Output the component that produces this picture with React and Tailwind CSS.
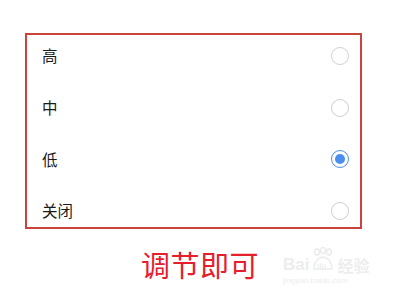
import React from 'react';

const options = [
  { label: '高', checked: false },
  { label: '中', checked: false },
  { label: '低', checked: true },
  { label: '关闭', checked: false },
];

function Radio({ checked }) {
  if (checked) {
    return (
      <div className="w-[18px] h-[18px] rounded-full border-[1.5px] border-[#4a90e6] flex items-center justify-center">
        <div className="w-[10px] h-[10px] rounded-full bg-[#4a8ef0]" />
      </div>
    );
  }
  return <div className="w-[18px] h-[18px] rounded-full border-[1.5px] border-[#cfcfcf]" />;
}

export default function App() {
  return (
    <div
      className="relative w-[400px] h-[300px] bg-white overflow-hidden"
      style={{ fontFamily: '"Noto Sans CJK SC", "Noto Sans", sans-serif' }}
    >
      <div className="pt-[33px] pl-[25px]">
        {/* options box */}
        <div className="w-[337px] h-[196px] border-2 border-[#c9443d]">
          <div className="flex flex-col pt-[6px] gap-[21.67px]">
            {options.map((o) => (
              <div key={o.label} className="h-[30px] flex items-center justify-between pl-[15px] pr-[11px]">
                <span className="text-[15.5px] leading-none text-[#1a1a1a]">{o.label}</span>
                <Radio checked={o.checked} />
              </div>
            ))}
          </div>
        </div>
      </div>

      <div className="mt-[21px] text-center text-[29px] leading-none text-[#e6202b] tracking-[0.5px]">
        调节即可
      </div>

      {/* watermark */}
      <div className="absolute left-[283px] top-[247px] flex flex-col items-start text-[#ededed]">
        <div className="flex items-end gap-[2px]">
          <span className="text-[17px] leading-none font-bold" style={{ fontFamily: '"Liberation Sans", sans-serif' }}>Bai</span>
          <svg width="24" height="26" viewBox="0 0 24 26" fill="none" stroke="#ebebeb" strokeWidth="1.4">
            <ellipse cx="6" cy="5" rx="2.5" ry="3" />
            <ellipse cx="12" cy="3.5" rx="2.5" ry="3" />
            <ellipse cx="18" cy="5" rx="2.5" ry="3" />
            <path d="M3 22 C3 14 8 10 12 10 C16 10 21 14 21 22 Z" />
            <text x="6" y="21" fontSize="8" fill="#ebebeb" stroke="none" fontFamily="Liberation Sans, sans-serif">du</text>
          </svg>
          <span className="text-[16px] leading-none font-bold">经验</span>
        </div>
        <span className="mt-[4px] text-[8px] leading-none" style={{ fontFamily: '"Liberation Sans", sans-serif' }}>jingyan.baidu.com</span>
      </div>
    </div>
  );
}
